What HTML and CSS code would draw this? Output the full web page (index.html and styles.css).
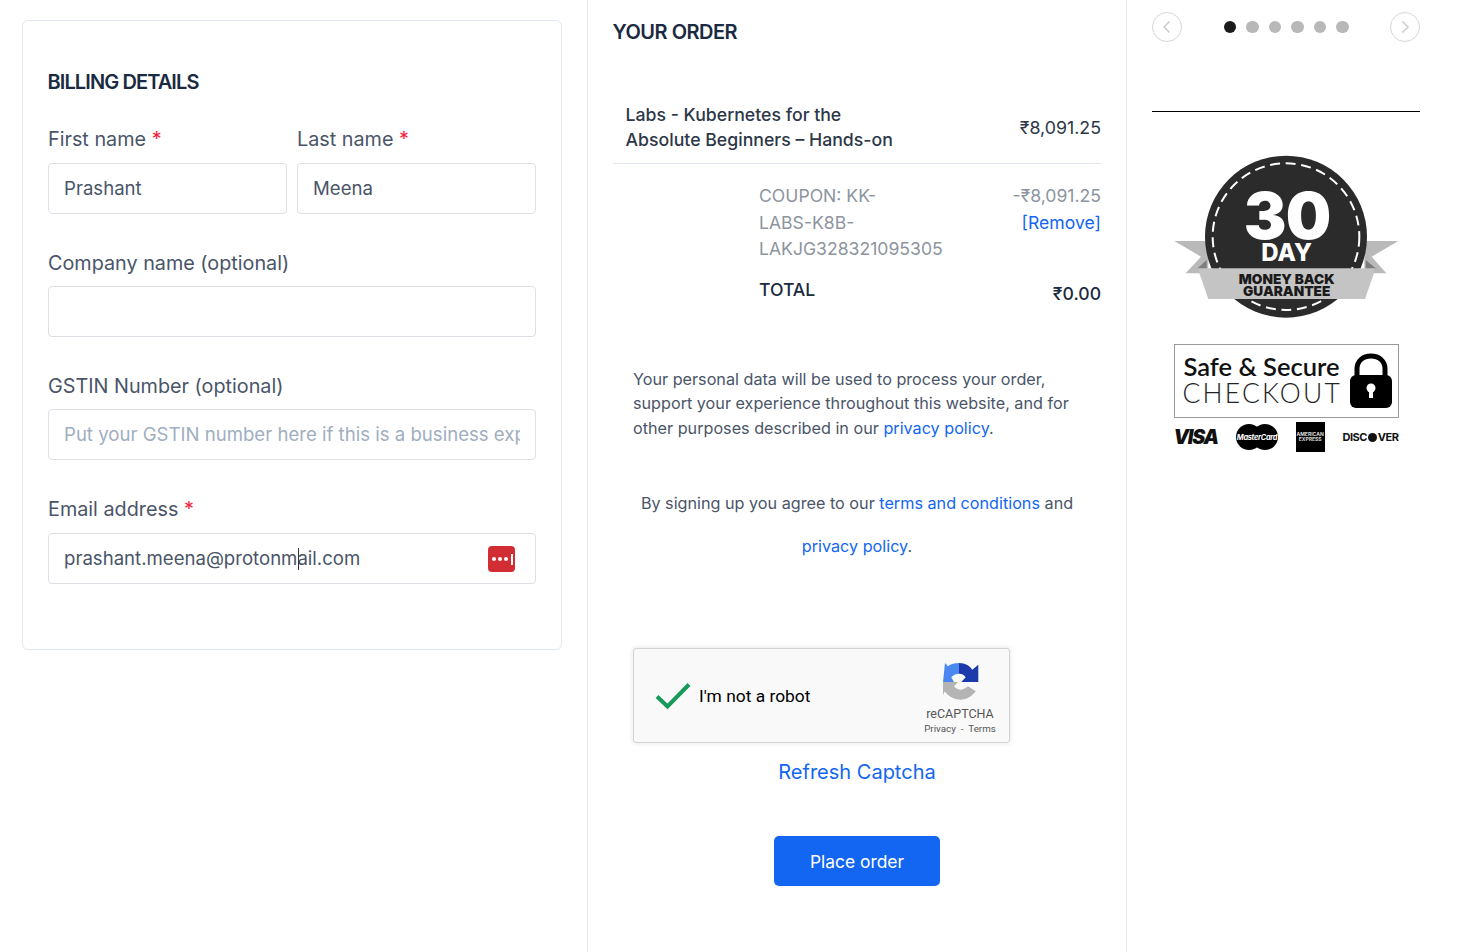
FILE: index.html
```html
<!DOCTYPE html>
<html lang="en">
<head>
<meta charset="utf-8">
<title>Checkout</title>
<link rel="stylesheet" href="styles.css">
</head>
<body>
<main class="page">
  <section class="billing-col">
    <form class="card">
      <h2 class="heading billing-title">BILLING DETAILS</h2>
      <div class="name-row">
        <div class="field">
          <label class="label label-tight">First name <span class="req">*</span></label>
          <input class="input" value="Prashant">
        </div>
        <div class="field">
          <label class="label label-tight">Last name <span class="req">*</span></label>
          <input class="input" value="Meena">
        </div>
      </div>
      <div class="field wide">
        <label class="label">Company name (optional)</label>
        <input class="input">
      </div>
      <div class="field wide">
        <label class="label">GSTIN Number (optional)</label>
        <input class="input" placeholder="Put your GSTIN number here if this is a business expense">
      </div>
      <div class="field wide">
        <label class="label label-tight">Email address <span class="req">*</span></label>
        <div class="input-wrap">
          <input class="input" value="prashant.meena@protonmail.com">
          <span class="caret"></span>
          <span class="lastpass"><i></i><i></i><i></i><b></b></span>
        </div>
      </div>
    </form>
  </section>

  <section class="order-col">
    <h2 class="heading order-title">YOUR ORDER</h2>
    <div class="item-row">
      <div class="item-name">Labs - Kubernetes for the<br>Absolute Beginners – Hands-on</div>
      <div class="item-price">₹8,091.25</div>
    </div>
    <div class="coupon-row">
      <div class="coupon-name">COUPON: KK-<br>LABS-K8B-<br>LAKJG328321095305</div>
      <div class="coupon-amount">-₹8,091.25<br><a class="link" href="#">[Remove]</a></div>
    </div>
    <div class="total-row">
      <div class="total-label">TOTAL</div>
      <div class="total-value">₹0.00</div>
    </div>
    <p class="privacy">Your personal data will be used to process your order, support your experience throughout this website, and for other purposes described in our <a class="link" href="#">privacy policy</a>.</p>
    <p class="terms">By signing up you agree to our <a class="link" href="#">terms and conditions</a> and<br><a class="link" href="#">privacy policy</a>.</p>
    <div class="captcha">
      <svg class="captcha-check" width="36" height="28" viewBox="0 0 36 28" aria-hidden="true"><path d="M2 14.500 L12.500 24.500 L34 2.500" fill="none" stroke="#169a5a" stroke-width="4"/></svg>
      <span class="captcha-text">I'm not a robot</span>
      <div class="captcha-brand">
        <svg width="38" height="38" viewBox="0 0 38 38" aria-hidden="true">
          <path d="M4 0 L7 3.300 C9.700 1 13.700 0 18 0 L18 10.700 C14.700 10.700 12 12.300 10.300 14.300 L13 19 L2 19Z" fill="#4a87f0"/>
          <path d="M18 0 C24.700 0 29 3.300 31.300 6.700 L37.300 1.700 L37.300 19 L20.300 19 L24.700 14.300 C23 11.700 21 10.700 18 10.700Z" fill="#1c3aa9"/>
          <path d="M2 19 L17 19 L13 23.300 C14.700 25.700 17 26.700 19.700 26.700 C22.500 26.700 25 25 27 23.300 L34.700 28.300 C31 33 26 36.700 19.700 36.700 C13 36.700 7 33 3.700 28.300 L2 32.300Z" fill="#b4b4b4"/>
        </svg>
        <div class="captcha-name">reCAPTCHA</div>
        <div class="captcha-links">Privacy&nbsp; - &nbsp;Terms</div>
      </div>
    </div>
    <a class="refresh" href="#">Refresh Captcha</a>
    <button class="place-order" type="button">Place order</button>
  </section>

  <aside class="trust-col">
    <div class="carousel-nav">
      <span class="nav-btn"><svg width="10" height="12" viewBox="0 0 10 12" aria-hidden="true"><path d="M7.500 0.500 L2 6 L7.500 11.500" fill="none" stroke="#cdcdcd" stroke-width="1.500"/></svg></span>
      <div class="dots"><i class="dot active"></i><i class="dot"></i><i class="dot"></i><i class="dot"></i><i class="dot"></i><i class="dot"></i></div>
      <span class="nav-btn"><svg width="10" height="12" viewBox="0 0 10 12" aria-hidden="true"><path d="M2.500 0.500 L8 6 L2.500 11.500" fill="none" stroke="#cdcdcd" stroke-width="1.500"/></svg></span>
    </div>
    <div class="rule"></div>
    <svg class="badge" width="225" height="164" viewBox="27 30 675 492" role="img">
      <path d="M28 288 L130 288 L130 385 L62 385 L108 335Z" fill="#b9b9b9"/>
      <path d="M700 288 L598 288 L598 385 L664 385 L620 335Z" fill="#b9b9b9"/>
      <path d="M98 370 L125 345 L125 385 L104 385Z" fill="#7d7d7d"/>
      <path d="M632 370 L602 345 L602 385 L626 385Z" fill="#7d7d7d"/>
      <circle cx="363" cy="275" r="243" fill="#2b2b2b"/>
      <circle cx="363" cy="275" r="220" fill="none" stroke="#fff" stroke-width="6" stroke-dasharray="30 17"/>
      <path d="M98 370 L632 370 L600 462 L130 462Z" fill="#c4c4c4"/>
      <text class="badge-30" x="366" y="282" text-anchor="middle">30</text>
      <text class="badge-day" x="365" y="347" text-anchor="middle">DAY</text>
      <text class="badge-money" x="365" y="418" text-anchor="middle">MONEY BACK</text>
      <text class="badge-money" x="365" y="452" text-anchor="middle">GUARANTEE</text>
    </svg>
    <div class="secure">
      <div class="secure-text">
        <div class="secure-top">Safe &amp; Secure</div>
        <div class="secure-bottom">CHECKOUT</div>
      </div>
      <svg width="44" height="56" viewBox="0 0 44 56" aria-hidden="true">
        <path d="M8 26 V16 C8 8 14 3 22 3 C30 3 36 8 36 16 V26" fill="none" stroke="#000" stroke-width="5"/>
        <rect x="1" y="22" width="42" height="33" rx="6" fill="#000"/>
        <circle cx="22" cy="35" r="4.500" fill="#fff"/>
        <rect x="20" y="36" width="4" height="9" fill="#fff"/>
      </svg>
    </div>
    <div class="cards">
      <span class="visa">VISA</span>
      <svg class="mc" width="42" height="26" viewBox="0 0 42 26" role="img">
        <circle cx="13" cy="13" r="13" fill="#000"/><circle cx="29" cy="13" r="13" fill="#000"/>
        <text class="mc-text" x="21" y="16" text-anchor="middle">MasterCard</text>
      </svg>
      <span class="amex"><span>AMERICAN</span><span>EXPRESS</span></span>
      <span class="discover">DISC<i></i>VER</span>
    </div>
  </aside>
</main>
</body>
</html>
```
FILE: styles.css
```css
* { box-sizing: border-box; }
html, body { height: 100%; margin: 0; }
body {
  font-family: Inter, "Noto Sans", sans-serif;
  color: #1a202c;
  background: #fff;
  overflow: hidden;
}
.page { display: flex; height: 952px; }
.link { color: #1266f1; text-decoration: none; }

/* billing */
.billing-col {
  width: 588px;
  padding: 20px 25px 0 22px;
  border-right: 1px solid #e5e7eb;
}
.card {
  width: 540px;
  height: 630px;
  padding: 49px 25px 0;
  border: 1px solid #e2e8f0;
  border-radius: 6px;
}
.heading {
  margin: 0;
  font-size: 20px;
  line-height: 24px;
  font-weight: 600;
  letter-spacing: -0.5px;
  color: #1a2a40;
}
.billing-title { letter-spacing: -0.9px; margin-left: -0.5px; }
.name-row { display: flex; gap: 10px; margin-top: 33px; }
.field { flex: 1; min-width: 0; }
.wide { margin-top: 37px; }
.label {
  display: block;
  font-size: 19.800px;
  line-height: 24px;
  color: #4a5568;
  margin-bottom: 11px;
}
.label-tight { margin-bottom: 12px; }
.req { color: #f5223f; }
.input {
  display: block;
  width: 100%;
  height: 51px;
  padding: 0 15px 2px;
  border: 1px solid #dcdfe4;
  border-radius: 4px;
  background: #fff;
  font: 400 18.600px Inter, sans-serif;
  color: #4a5568;
  outline: none;
}
.input::placeholder { color: #a0aec0; opacity: 1; }
.input-wrap { position: relative; }
.caret {
  position: absolute;
  left: 250px;
  top: 15px;
  width: 1px;
  height: 22px;
  background: #333;
}
.lastpass {
  position: absolute;
  right: 21px;
  top: 13px;
  width: 27px;
  height: 26px;
  display: flex;
  align-items: center;
  gap: 2px;
  padding-left: 4px;
  border-radius: 4px;
  background: #d32d34;
}
.lastpass i { width: 4px; height: 4px; border-radius: 50%; background: #fff; }
.lastpass b { width: 1.500px; height: 11px; margin-left: 1px; background: #fff; }

/* order */
.order-col {
  width: 539px;
  padding: 20px 25px 0;
  border-right: 1px solid #e5e7eb;
}
.order-title { margin-bottom: 58px; margin-left: -0.5px; }
.item-row {
  display: flex;
  justify-content: space-between;
  align-items: center;
  padding: 0 0 11px 12.500px;
  border-bottom: 1px solid #e2e8f0;
}
.item-name { font-size: 17.700px; line-height: 25px; font-weight: 500; color: #2d3748; }
.item-price { font-size: 17.800px; color: #2d3748; }
.coupon-row {
  display: flex;
  justify-content: space-between;
  padding: 19px 0 0 146px;
  font-size: 17.600px;
  line-height: 26.500px;
  color: #8d949e;
}
.coupon-amount { text-align: right; }
.total-row {
  display: flex;
  justify-content: space-between;
  padding: 12px 0 0 146px;
  font-size: 17.600px;
  color: #1a2a40;
}
.total-label { line-height: 30px; font-weight: 500; }
.total-value { line-height: 30px; padding-top: 4px; font-weight: 500; }
.privacy {
  margin: 58px 0 0 20px;
  width: 450px;
  font-size: 16.200px;
  line-height: 24.500px;
  color: #4a5568;
}
.terms {
  margin: 42px 0 0;
  text-align: center;
  font-size: 16.200px;
  line-height: 43px;
  color: #4a5568;
}
.captcha {
  display: flex;
  align-items: center;
  width: 377px;
  height: 95px;
  margin: 80px 0 0 20px;
  border: 1px solid #d3d3d3;
  border-radius: 3px;
  background: #f9f9f9;
  box-shadow: 0 0 4px 1px rgba(0, 0, 0, 0.08);
  font-family: Roboto, sans-serif;
}
.captcha-check { margin-left: 21px; }
.captcha-text { margin-left: 8px; font-size: 17.400px; color: #000; }
.captcha-brand {
  margin-left: auto;
  width: 98px;
  padding-top: 7px;
  text-align: center;
  color: #555;
}
.captcha-brand svg { display: block; margin: 0 auto 4px; }
.captcha-name { font-size: 12.500px; line-height: 18px; }
.captcha-links { font-size: 9.800px; line-height: 12px; }
.refresh {
  display: block;
  margin-top: 16px;
  text-align: center;
  font-size: 20px;
  line-height: 26px;
  color: #1266f1;
  text-decoration: none;
}
.place-order {
  display: block;
  width: 166px;
  height: 50px;
  margin: 51px auto 0;
  border: 0;
  border-radius: 5px;
  background: #1266f1;
  color: #fff;
  font: 400 17.400px Inter, sans-serif;
}

/* trust */
.trust-col { width: 340px; padding: 12px 47px 0 25px; }
.carousel-nav { display: flex; justify-content: space-between; align-items: center; }
.nav-btn {
  width: 30px;
  height: 30px;
  display: flex;
  align-items: center;
  justify-content: center;
  border: 1.500px solid #d6d6d6;
  border-radius: 50%;
}
.dots { display: flex; gap: 10px; }
.dot { width: 12.500px; height: 12.500px; border-radius: 50%; background: #b8b8b8; }
.dot.active { background: #1a1a1a; }
.rule { height: 1px; margin-top: 69px; background: #000; }
.badge { display: block; margin: 43px auto 0; }
.badge-30 { font: 900 192px Inter, sans-serif; fill: #fff; letter-spacing: -3px; }
.badge-day { font: 800 72px Inter, sans-serif; fill: #fff; }
.badge-money { font: 900 41px Inter, sans-serif; fill: #1b1b1b; }
.secure {
  display: flex;
  align-items: center;
  justify-content: space-between;
  width: 225px;
  height: 74px;
  margin: 25px auto 0;
  padding: 0 5px 0 9px;
  border: 1px solid #9a9a9a;
}
.secure-text { padding-bottom: 3px; }
.secure-top { font: 600 25.500px/28px Lato, sans-serif; color: #111; white-space: nowrap; }
.secure-bottom { font: 300 26.500px/27px Lato, sans-serif; letter-spacing: 2.200px; color: #222; white-space: nowrap; margin-left: -1px; }
.cards {
  display: flex;
  align-items: center;
  justify-content: space-between;
  width: 225px;
  height: 32px;
  margin: 3px auto 0;
}
.visa { font: italic 900 19.500px Inter, sans-serif; letter-spacing: -1.200px; color: #111; }
.mc { display: block; }
.mc-text { font: italic 700 7.400px Inter, sans-serif; fill: #fff; letter-spacing: -0.3px; }
.amex {
  display: flex;
  flex-direction: column;
  justify-content: center;
  width: 29px;
  height: 30px;
  background: #000;
  color: #ddd;
  font: 700 5px/5.500px Inter, sans-serif;
  text-align: center;
  overflow: hidden;
}
.discover {
  display: flex;
  align-items: center;
  font: 700 11px Inter, sans-serif;
  letter-spacing: -0.5px;
  color: #111;
}
.discover i { width: 9px; height: 9px; margin: 0 1px; border-radius: 50%; background: #111; }
```
